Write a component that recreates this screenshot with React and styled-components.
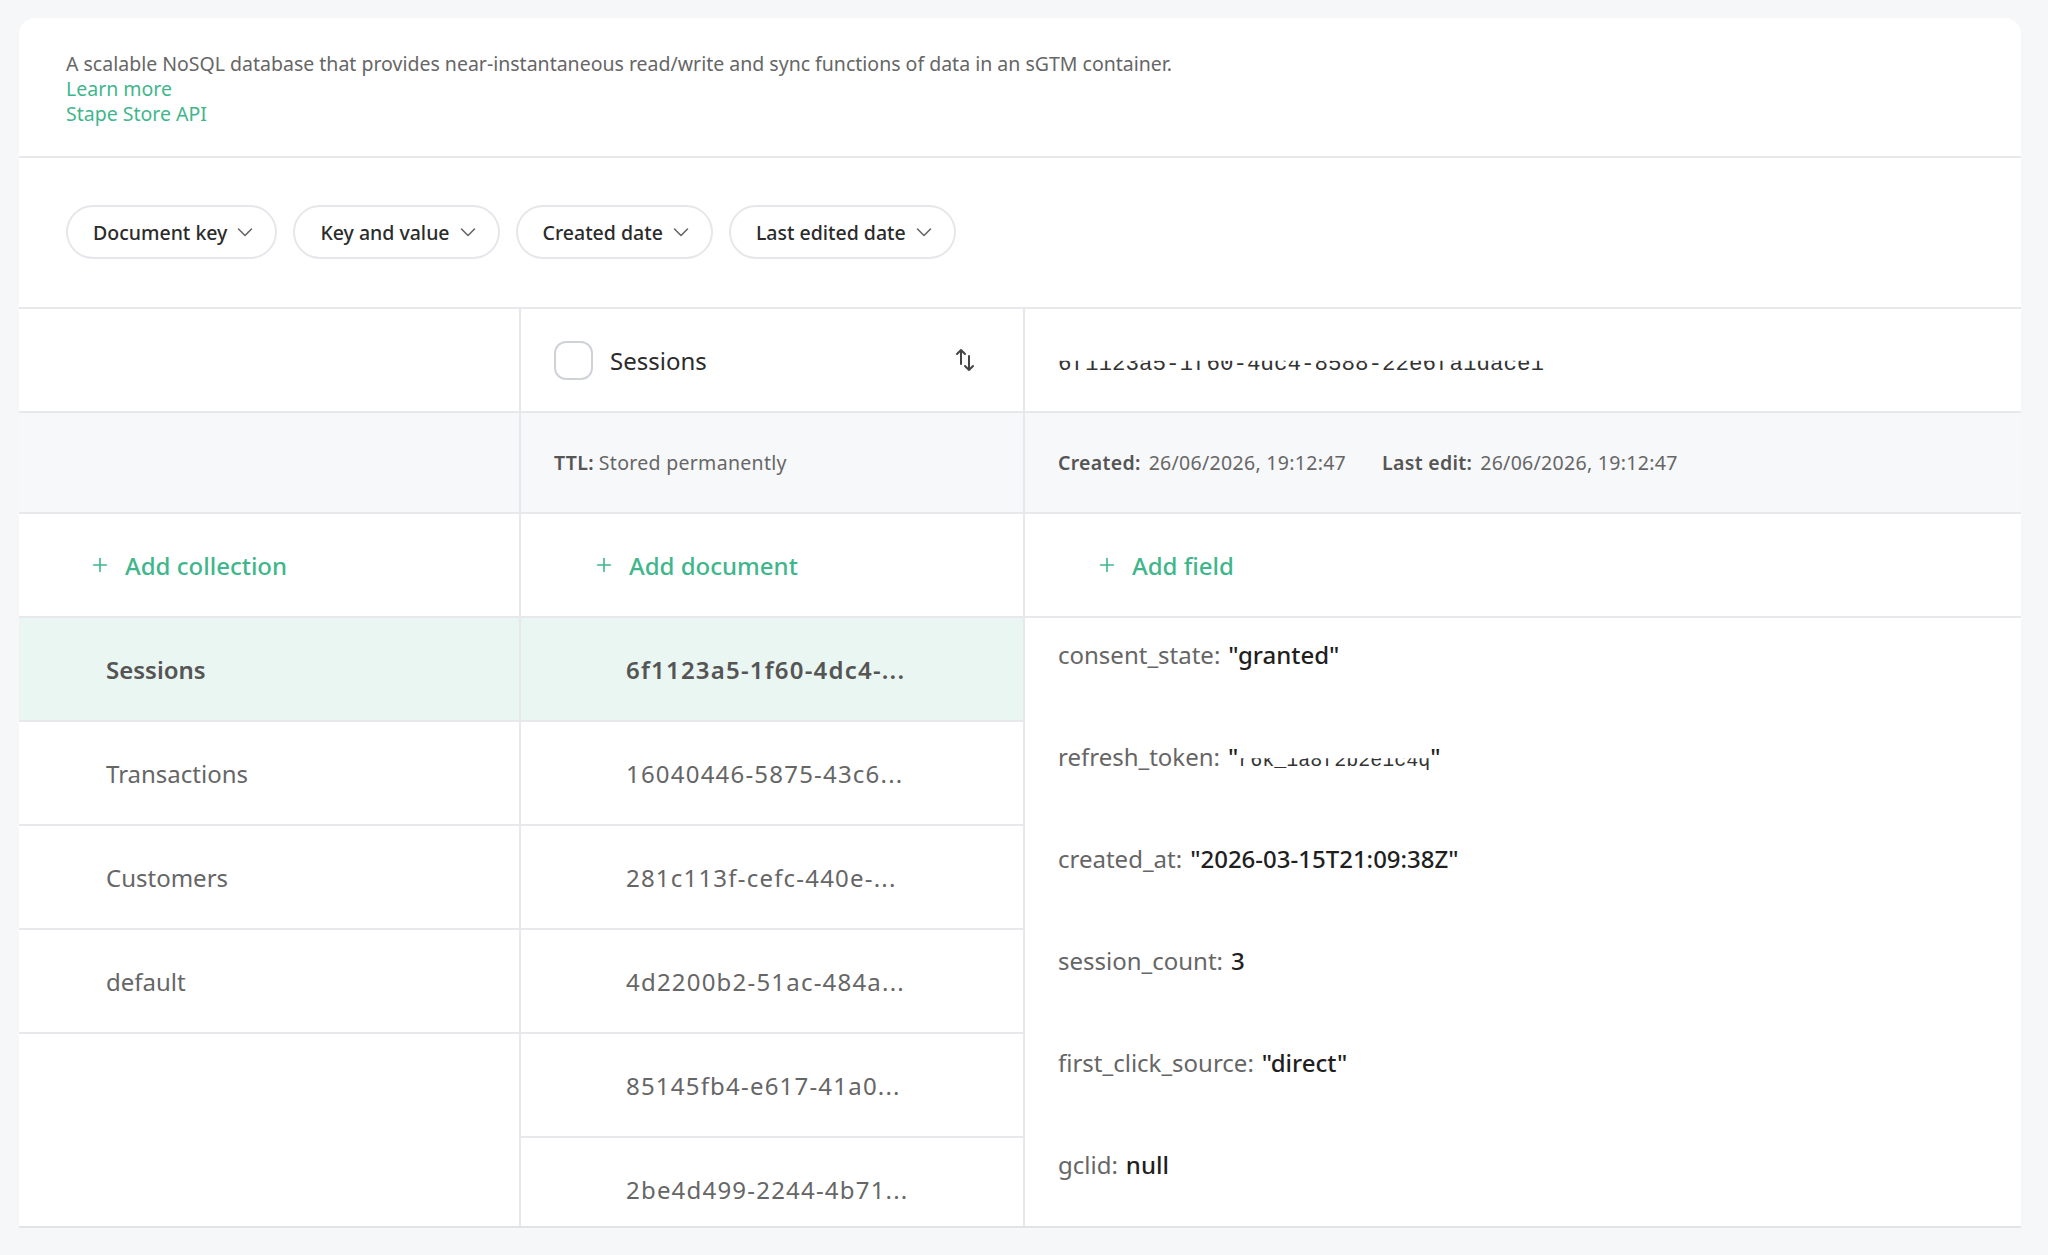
import React from 'react'
import styled, { createGlobalStyle } from 'styled-components'
import { Plus } from 'lucide-react'

const GlobalStyle = createGlobalStyle`
  * { box-sizing: border-box; }
  body {
    margin: 0;
    background: #f6f7f9;
    font-family: "Noto Sans", "Open Sans", sans-serif;
    color: #2b2b2b;
  }
`

const line = '#e6e8eb'
const green = '#3fb68b'

const Page = styled.div`
  padding: 18px 27px 0 19px;
  min-height: 1255px;
`

const Card = styled.div`
  background: #fff;
  border-radius: 16px 16px 0 0;
  height: 1210px;
  overflow: hidden;
  border-bottom: 2px solid #e1e3e6;
  display: flex;
  flex-direction: column;
`

const Intro = styled.div`
  padding: 33px 47px 30px;
  border-bottom: 2px solid ${line};
  font-size: 19.5px;
  line-height: 25px;
  color: #666;
`

const Link = styled.a`
  display: block;
  color: ${green};
  text-decoration: none;
`

const Filters = styled.div`
  display: flex;
  gap: 16px;
  padding: 47px 47px 48px;
  border-bottom: 2px solid ${line};
`

const Pill = styled.button`
  display: flex;
  align-items: center;
  gap: 10px;
  height: 54px;
  padding: 0 22px 0 25px;
  border: 2px solid #e6e7eb;
  border-radius: 27px;
  background: #fff;
  font-family: inherit;
  font-size: 19.5px;
  font-weight: 500;
  color: #2b2b2b;
`

const Grid = styled.div`
  flex: 1;
  display: grid;
  grid-template-columns: 502px 504px 1fr;
  grid-template-rows: 104px 101px 104px 1fr;
  min-height: 0;
`

const Cell = styled.div`
  display: flex;
  align-items: center;
  padding: 0 ${p => p.$pr || 33}px 0 ${p => p.$pl || 33}px;
  border-bottom: 2px solid ${line};
  border-right: ${p => (p.$last ? 'none' : `2px solid ${line}`)};
  background: ${p => (p.$muted ? '#f7f8fa' : '#fff')};
  font-size: 19.5px;
  letter-spacing: 0.3px;
  color: #666;
`

const Checkbox = styled.span`
  width: 39px;
  height: 39px;
  border: 2px solid #cfd3d8;
  border-radius: 12px;
  flex-shrink: 0;
`

const HeaderTitle = styled.span`
  flex: 1;
  margin-left: 17px;
  font-size: 24px;
  letter-spacing: 0;
  color: #2b2b2b;
`

const Redacted = styled.span`
  font-family: "Liberation Mono", "DejaVu Sans Mono", monospace;
  font-size: 22.5px;
  letter-spacing: 0;
  color: #333;
  padding-top: ${p => p.$offset || 0}px;
  clip-path: inset(52% 0 0 0);
`

const Label = styled.b`
  font-weight: 600;
  color: #555;
  margin-right: 8px;
`

const MetaGroup = styled.span`
  margin-right: 36px;
`

const AddButton = styled.span`
  display: flex;
  align-items: center;
  gap: 14px;
  font-size: 24px;
  letter-spacing: 0;
  color: ${green};
  font-weight: 500;
`

const Column = styled.div`
  display: flex;
  flex-direction: column;
  border-right: ${p => (p.$last ? 'none' : `2px solid ${line}`)};
  overflow: hidden;
`

const Row = styled.div`
  flex-shrink: 0;
  height: 104px;
  display: flex;
  align-items: center;
  padding-left: ${p => p.$pl}px;
  border-bottom: 2px solid ${line};
  background: ${p => (p.$active ? '#eaf6f1' : '#fff')};
  font-size: 24px;
  letter-spacing: ${p => p.$spacing || 0}px;
  font-weight: ${p => (p.$active ? 600 : 400)};
  color: ${p => (p.$active ? '#555' : '#666')};
  white-space: nowrap;
`

const Fields = styled.div`
  padding: 22px 33px 0;
`

const Field = styled.div`
  height: 102px;
  font-size: 24px;
  line-height: 30px;
  color: #666;
`

const Value = styled.span`
  color: #1f1f1f;
  font-weight: 500;
  margin-left: 8px;
`

function Chevron() {
  return (
    <svg width="16" height="10" viewBox="0 0 16 10" fill="none" stroke="#666" strokeWidth="1.6" strokeLinecap="round" strokeLinejoin="round">
      <path d="M1.5 2l6.5 6.5L14.5 2" />
    </svg>
  )
}

function SortIcon() {
  return (
    <svg width="26" height="26" viewBox="0 0 26 26" fill="none" stroke="#444" strokeWidth="2" strokeLinecap="round" strokeLinejoin="round">
      <path d="M9 17V3M5 7l4-4 4 4" />
      <path d="M17 9v14M13 19l4 4 4-4" />
    </svg>
  )
}

const collections = ['Sessions', 'Transactions', 'Customers', 'default']
const documents = [
  '6f1123a5-1f60-4dc4-...',
  '16040446-5875-43c6...',
  '281c113f-cefc-440e-...',
  '4d2200b2-51ac-484a...',
  '85145fb4-e617-41a0...',
  '2be4d499-2244-4b71...',
]
const fields = [
  ['consent_state:', '"granted"'],
  ['refresh_token:', null],
  ['created_at:', '"2026-03-15T21:09:38Z"'],
  ['session_count:', '3'],
  ['first_click_source:', '"direct"'],
  ['gclid:', 'null'],
]

export default function App() {
  return (
    <Page>
      <GlobalStyle />
      <Card>
        <Intro>
          A scalable NoSQL database that provides near-instantaneous read/write and sync functions of data in an sGTM container.
          <Link href="#">Learn more</Link>
          <Link href="#">Stape Store API</Link>
        </Intro>
        <Filters>
          {['Document key', 'Key and value', 'Created date', 'Last edited date'].map(f => (
            <Pill key={f}>
              {f}
              <Chevron />
            </Pill>
          ))}
        </Filters>
        <Grid>
          <Cell />
          <Cell $pr={45}>
            <Checkbox />
            <HeaderTitle>Sessions</HeaderTitle>
            <SortIcon />
          </Cell>
          <Cell $last>
            <Redacted $offset={8}>6f1123a5-1f60-4dc4-8588-22e6fa1dace1</Redacted>
          </Cell>

          <Cell $muted />
          <Cell $muted>
            <Label style={{ marginRight: 5 }}>TTL:</Label> Stored permanently
          </Cell>
          <Cell $muted $last>
            <MetaGroup><Label>Created:</Label>26/06/2026, 19:12:47</MetaGroup>
            <MetaGroup><Label>Last edit:</Label>26/06/2026, 19:12:47</MetaGroup>
          </Cell>

          <Cell $pl={70}>
            <AddButton><Plus size={22} strokeWidth={1.75} />Add collection</AddButton>
          </Cell>
          <Cell $pl={72}>
            <AddButton><Plus size={22} strokeWidth={1.75} />Add document</AddButton>
          </Cell>
          <Cell $pl={71} $last>
            <AddButton><Plus size={22} strokeWidth={1.75} />Add field</AddButton>
          </Cell>

          <Column>
            {collections.map((c, i) => (
              <Row key={c} $pl={87} $active={i === 0}>{c}</Row>
            ))}
          </Column>
          <Column>
            {documents.map((d, i) => (
              <Row key={d} $pl={105} $spacing={1.2} $active={i === 0}>{d}</Row>
            ))}
          </Column>
          <Column $last>
            <Fields>
              {fields.map(([k, v]) => (
                <Field key={k}>
                  {k}
                  {v === null ? (
                    <Value>"<Redacted style={{ fontSize: 20, clipPath: 'inset(40% 0 0 0)' }}>r6k_1a8f2b2e1c4q</Redacted>"</Value>
                  ) : (
                    <Value>{v}</Value>
                  )}
                </Field>
              ))}
            </Fields>
          </Column>
        </Grid>
      </Card>
    </Page>
  )
}
